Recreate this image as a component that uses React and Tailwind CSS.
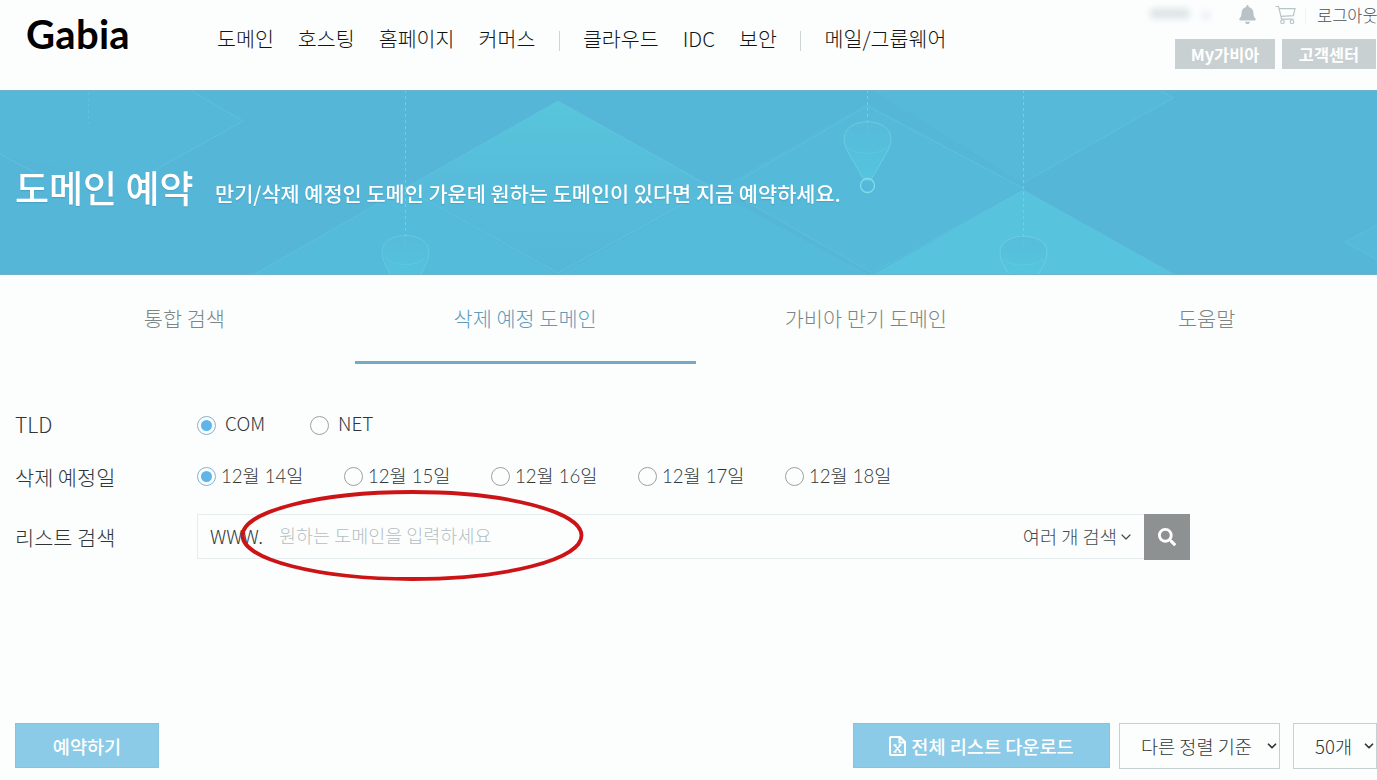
import { useState } from 'react';
import { FaBell, FaSearch } from 'react-icons/fa';
import { ChevronDown } from 'lucide-react';

const MENU = [
    ['도메인', '호스팅', '홈페이지', '커머스'],
    ['클라우드', 'IDC', '보안'],
    ['메일/그룹웨어'],
];
const TABS = ['통합 검색', '삭제 예정 도메인', '가비아 만기 도메인', '도움말'];
const DATES = ['12월 14일', '12월 15일', '12월 16일', '12월 17일', '12월 18일'];

function CartIcon() {
    return (
        <svg width="22" height="20" viewBox="0 0 22 20" fill="none" stroke="#b9c4c6" strokeWidth="1.2">
            <path d="M0.5 1.5H3.6L6.6 14.2H18.5M4.3 3.6H20L18.3 10.6L6 11.4" />
            <circle cx="7.500" cy="16.800" r="1.8" />
            <circle cx="17" cy="16.800" r="1.8" />
        </svg>
    );
}

function ExcelIcon() {
    return (
        <svg className="mr-[5px] shrink-0" width="17" height="20" viewBox="0 0 17 20" fill="none" stroke="currentColor" strokeWidth="2">
            <path d="M1 2Q1 1 2 1H11L16 6V18Q16 19 15 19H2Q1 19 1 18ZM10.500 1.500V6.500H15.500" />
            <path d="M5.500 9L11.500 16M11.500 9L5.500 16M4.500 9H7.500M9.800 9H12.500M4.500 16H7.500M9.800 16H12.500" strokeWidth="1.400" />
        </svg>
    );
}

function Radio({ checked, onClick, children, className = '' }) {
    return (
        <button type="button" role="radio" aria-checked={checked} onClick={onClick} className={`flex items-center ${className}`}>
            <span className={`flex size-[19px] shrink-0 items-center justify-center rounded-full border ${checked ? 'border-[#7fb3d3]' : 'border-[#9aa0a2]'}`}>
                {checked && <span className="size-[11px] rounded-full bg-[#5fb5ea]" />}
            </span>
            {children}
        </button>
    );
}

// Faint isometric tiles and hanging lamps behind the banner title
function BannerArt() {
    return (
        <svg className="absolute inset-x-0 top-0" width="1377" height="183" viewBox="0 91 1377 183" fill="none">
            <defs>
                <linearGradient id="tile" x1="0" y1="0" x2="0" y2="1">
                    <stop offset="0" stopColor="#58c6db" />
                    <stop offset=".45" stopColor="#56bcda" />
                    <stop offset="1" stopColor="#55b7d8" />
                </linearGradient>
                <linearGradient id="lamp" x1="0" y1="0" x2="0" y2="1">
                    <stop offset="0" stopColor="#58bbda" />
                    <stop offset="1" stopColor="#55c8df" />
                </linearGradient>
            </defs>
            <path d="M0 90H190L243 121L130 184L0 155Z" fill="#57bad9" opacity=".5" />
            <path d="M253 275L405 188L558 275Z" fill="#55bbda" />
            <path d="M558 275L712 190L870 275Z" fill="#54bbda" />
            <path d="M558 101L715 188L558 274L405 188Z" fill="url(#tile)" />
            <path d="M564 90L712 183L867 98L855 90Z" fill="#55b7d8" />
            <path d="M867 103L1023 188L872 273L720 187Z" fill="#55b9d9" />
            <path d="M872 90H1160L1173 98L1023 183Z" fill="#56b9d9" />
            <path d="M1023 190L1175 275H872Z" fill="#57c3dc" />
            <path d="M1377 225L1345 242L1377 260Z" fill="#57b9da" />
            <g stroke="#62c3e0" strokeWidth="1" opacity=".75">
                <path d="M190 90L243 121L155 170M0 154L34 172" />
                <path d="M253 275L558 101L712 188M405 188L558 273L705 192" />
                <path d="M740 180L867 106L1023 188M730 192L872 273L1023 190L1175 275" />
                <path d="M1023 183L1173 98L1160 90M1377 225L1345 242L1377 260" />
            </g>
            <g stroke="#7cd3e6" strokeDasharray="3 3" opacity=".8">
                <path d="M88.500 92V124" opacity=".4" />
                <path d="M405.500 90V247M867.500 90V136M1023.500 90V248" />
            </g>
            <g stroke="#72d0e3" fill="url(#lamp)">
                <path d="M844 139C844 116 891 116 891 139C891 144 889 148 887 152L871 180H864L848 152C846 148 844 144 844 139Z" opacity=".8" />
                <path d="M382 252C382 230 429 230 429 252C429 262 423 268 421 275H390C388 268 382 262 382 252Z" opacity=".6" />
                <path d="M1000 252C1000 231 1047 231 1047 252C1047 262 1041 268 1038 275H1009C1006 268 1000 262 1000 252Z" opacity=".8" />
                <path d="M386 257C391 267 420 267 425 257M1004 259C1009 267 1038 267 1043 259M848 148C855 155 880 155 887 148" strokeOpacity=".4" fill="none" />
            </g>
            <circle cx="867.500" cy="185.500" r="7" stroke="#83dcec" strokeWidth="1.3" />
        </svg>
    );
}

export default function App() {
    const [tab, setTab] = useState(1);
    const [tld, setTld] = useState('COM');
    const [date, setDate] = useState(DATES[0]);

    return (
        <div className="h-[780px] w-[1377px] overflow-hidden bg-[#fcfefe] font-['Noto_Sans_CJK_KR','Noto_Sans',sans-serif] font-light whitespace-nowrap text-[#303638]">
            {/* Top bar */}
            <header className="flex h-[90px] items-start">
                <div className="w-[217px] pt-[10px] pl-[26px] font-['Lato',sans-serif] text-[40px] leading-[48px] font-bold tracking-[0.3px] text-black">Gabia</div>
                <nav className="flex pt-[22px] text-[20.600px] leading-[32px] text-[#101414]">
                    {MENU.map((group, i) => (
                        <div key={i} className="flex items-center">
                            {i > 0 && <span className="mx-[23.300px] mt-[5px] h-5 w-px bg-[#cdd5d6]" />}
                            <div className="flex gap-6">
                                {group.map(item => <a key={item}>{item}</a>)}
                            </div>
                        </div>
                    ))}
                </nav>
                <div className="ml-auto flex flex-col items-end">
                    <div className="flex h-[39px] items-start">
                        <div className="mt-[8px] mr-[28px] flex gap-3 blur-[3px]">
                            <span className="h-[11px] w-[40px] rounded bg-[#dfe6e7]" />
                            <span className="mt-1 h-[7px] w-[8px] bg-[#e6edee]" />
                        </div>
                        <FaBell className="mt-[5px] mr-[18px] text-[#b9c3c5]" size={19} />
                        <div className="mt-[5px]"><CartIcon /></div>
                        <span className="mt-2 ml-[8px] h-4 w-px bg-[#eef3f3]" />
                        <a className="ml-[11px] w-[60px] pt-[3px] text-[16.500px] leading-6 text-[#4a5052]">로그아웃</a>
                    </div>
                    <div className="flex gap-[7px] pr-px text-[16.400px] leading-[30px] font-bold text-white">
                        <a className="h-[30px] w-[100px] bg-[#c8d0d2] text-center">My가비아</a>
                        <a className="h-[30px] w-[94px] bg-[#c8d0d2] text-center">고객센터</a>
                    </div>
                </div>
            </header>

            {/* Page title */}
            <section className="relative h-[185px] border-y border-[#6eb3cb] bg-[#55b6d8]">
                <BannerArt />
                <div className="relative flex pt-[69px] pl-[15px] leading-[54px] text-white">
                    <h1 className="w-[200px] text-[37px] font-medium [text-shadow:0_1px_1px_#3f8fb088]">도메인 예약</h1>
                    <p className="pt-[6px] text-[20.800px] font-medium [text-shadow:0_1px_1px_#3f8fb088]">만기/삭제 예정인 도메인 가운데 원하는 도메인이 있다면 지금 예약하세요.</p>
                </div>
            </section>

            <div className="flex h-[89px] pl-[14px] text-[20.800px]">
                {TABS.map((name, i) => (
                    <button
                        key={name}
                        onClick={() => setTab(i)}
                        className={`flex flex-1 items-start justify-center border-b-[3px] pt-[27px] leading-[32px] ${tab === i ? 'border-[#78a9c2] text-[#5d9cbd]' : 'border-transparent text-[#7d8585]'}`}
                    >
                        {name}
                    </button>
                ))}
            </div>

            {/* Search conditions */}
            <div className="flex flex-col pt-[40px] pl-[15px]">
                <div className="flex h-[42px] items-center">
                    <div className="w-[182px] text-[21px]">TLD</div>
                    <Radio checked={tld === 'COM'} onClick={() => setTld('COM')} className="w-[113px]">
                        <span className="-mt-[3px] ml-[9px] text-[19px]">COM</span>
                    </Radio>
                    <Radio checked={tld === 'NET'} onClick={() => setTld('NET')}>
                        <span className="-mt-[3px] ml-[9px] text-[19px]">NET</span>
                    </Radio>
                </div>
                <div className="mt-[10px] flex h-[42px] items-center">
                    <div className="w-[182px] pt-px text-[20.800px]">삭제 예정일</div>
                    {DATES.map(d => (
                        <Radio key={d} checked={date === d} onClick={() => setDate(d)} className="w-[147px]">
                            <span className="ml-[5px] font-['Lato','Noto_Sans_CJK_KR',sans-serif] text-[18.600px]">{d}</span>
                        </Radio>
                    ))}
                </div>
                <div className="mt-[15px] flex h-[46px] items-center">
                    <div className="w-[182px] pt-[4px] text-[20.800px]">리스트 검색</div>
                    <div className="relative flex h-[45px] w-[947px] items-center border border-r-0 border-[#e4ecee] pl-[12px] text-[18.700px]">
                        <span className="w-[69px] text-[19px]">WWW.</span>
                        <input
                            className="flex-1 text-[18.500px] outline-none placeholder:text-[#b4bfc1] placeholder:opacity-100"
                            placeholder="원하는 도메인을 입력하세요"
                        />
                        <button className="flex items-center pr-[10px] text-[#454b4d]">
                            여러 개 검색
                            <ChevronDown size={16} strokeWidth={1.8} className="mt-[3px] ml-px" />
                        </button>
                        {/* hand-marked highlight over the input */}
                        <svg className="pointer-events-none absolute -top-[26px] left-[41px]" width="346" height="94" fill="none">
                            <ellipse cx="173" cy="46.500" rx="169.500" ry="43.500" stroke="#cc1417" strokeWidth="3.800" />
                        </svg>
                    </div>
                    <button className="mt-[2px] flex h-[46px] w-[46px] shrink-0 items-center justify-center bg-[#8d9192] text-white">
                        <FaSearch size={18} />
                    </button>
                </div>
            </div>

            {/* List actions */}
            <div className="mt-[164px] flex h-[46px] items-start pl-[15px] text-[18.600px]">
                <button className="h-[45px] w-[144px] border border-[#86c3de] bg-[#8bcbe7] font-medium text-white">예약하기</button>
                <button className="ml-[694px] flex h-[45px] w-[257px] items-center justify-center border border-[#86c3de] bg-[#8bcbe7] font-medium text-white">
                    <ExcelIcon />
                    전체 리스트 다운로드
                </button>
                <button className="ml-[9px] flex h-[46px] w-[161px] items-center border border-[#c5d0d3] pl-[21px]">
                    <span className="w-[127px] text-left">다른 정렬 기준</span>
                    <ChevronDown size={14} strokeWidth={3} className="shrink-0" />
                </button>
                <button className="ml-[13px] flex h-[46px] w-[84px] items-center border border-[#c5d0d3] pl-[21px]">
                    <span className="w-[49px] text-left">50개</span>
                    <ChevronDown size={14} strokeWidth={3} className="shrink-0" />
                </button>
            </div>
        </div>
    );
}
